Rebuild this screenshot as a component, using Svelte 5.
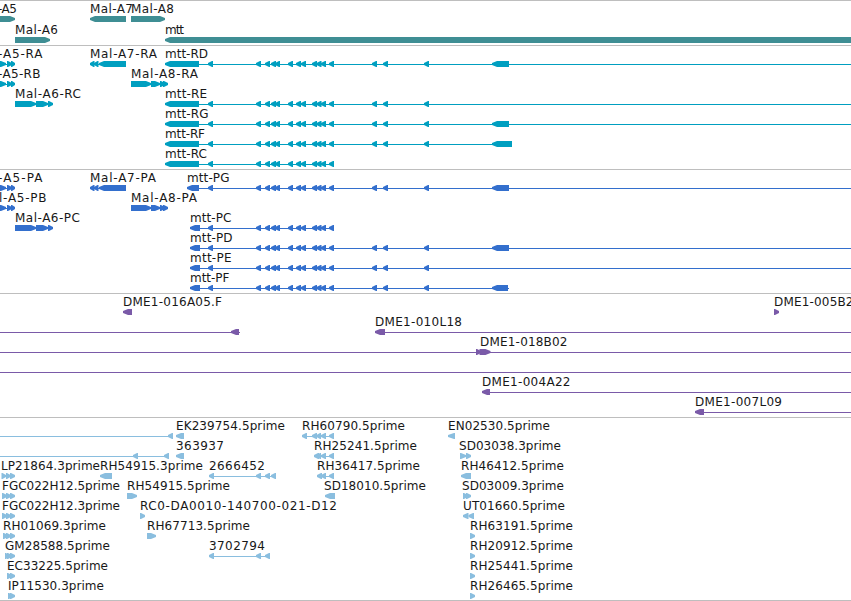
<script>
  // Feature: { line: [from, to], dir: 'l' | 'r', exons: [[from, to], ...] }
  // Label: [text, start, end]
  const L = (exons, line) => ({ dir: 'l', exons, line });
  const R = (exons, line) => ({ dir: 'r', exons, line });
  const EDGE = 851;

  const core = [208, 256, 265, 271, 275, 288, 296, 301, 312, 316.5, 321, 329].map((x) => [x, x + 5]);
  const far = [372, 383, 424].map((x) => [x, x + 5]);
  const mtt = (first, last, end) => L([first, ...core, ...(end > 334 ? far : []), ...(last ? [last] : [])], [first[0] + 5, end]);
  const a5 = () => R([[-8, 6], [7, 12], [11, 15]], [0, 12]);
  const a6 = () => R([[15, 36], [36, 48], [48, 53]], [15, 50]);
  const a7 = () => L([[90, 94.5], [94, 98.5], [99, 126]], [92, 126]);
  const a8 = () => R([[131, 151], [151, 160], [160, 165], [163, 168]], [131, 165]);

  const tracks = [
    {
      name: 'genes', color: '#3f8e94', height: 45, pitch: 21,
      rows: [
        { labels: [['-A5', -2, 16.5], ['Mal-A7', 90, 132.5], ['Mal-A8', 131, 173.5]], feats: [R([[-10, 15]]), L([[90, 126]]), R([[131, 165]])] },
        { labels: [['Mal-A6', 15, 57.5], ['mtt', 165, 183.5]], feats: [R([[15, 50]]), L([[165, 860]])] }
      ]
    },
    {
      name: 'transcripts', color: '#009fc0', height: 124, pitch: 20,
      rows: [
        { labels: [['-A5-RA', -2, 42], ['Mal-A7-RA', 90, 156.5], ['mtt-RD', 165, 207.5]], feats: [a5(), a7(), mtt([165, 199], [492, 509], EDGE)] },
        { labels: [['-A5-RB', -2, 40], ['Mal-A8-RA', 131, 197.5]], feats: [a5(), a8()] },
        { labels: [['Mal-A6-RC', 15, 80.5], ['mtt-RE', 165, 206.5]], feats: [a6(), mtt([165, 199], null, EDGE)] },
        { labels: [['mtt-RG', 165, 208]], feats: [mtt([165, 199], [492, 509], EDGE)] },
        { labels: [['mtt-RF', 165, 204.5]], feats: [mtt([165, 199], [492, 512], 512)] },
        { labels: [['mtt-RC', 165, 206.5]], feats: [mtt([165, 199], null, 334)] }
      ]
    },
    {
      name: 'proteins', color: '#336fcd', height: 124, pitch: 20,
      rows: [
        { labels: [['-A5-PA', -2, 42], ['Mal-A7-PA', 90, 155.5], ['mtt-PG', 187, 229]], feats: [a5(), a7(), mtt([187, 199], [492, 509], EDGE)] },
        { labels: [['l-A5-PB', -1, 46], ['Mal-A8-PA', 131, 196.5]], feats: [a5(), a8()] },
        { labels: [['Mal-A6-PC', 15, 79.5], ['mtt-PC', 190, 231]], feats: [a6(), mtt([190, 200], null, 334)] },
        { labels: [['mtt-PD', 190, 232]], feats: [mtt([190, 200], [492, 509], EDGE)] },
        { labels: [['mtt-PE', 190, 231]], feats: [mtt([190, 200], null, EDGE)] },
        { labels: [['mtt-PF', 190, 229]], feats: [mtt([190, 200], [492, 508], 509)] }
      ]
    },
    {
      name: 'clones', color: '#7a5aa8', height: 124, pitch: 20,
      rows: [
        { labels: [['DME1-016A05.F', 123, 221.5], ['DME1-005B2', 774, 853]], feats: [L([[123, 132]]), R([[774, 779]])] },
        { labels: [['DME1-010L18', 375, 461.5]], feats: [L([[231, 239]], [0, 240]), L([[375, 385]], [380, EDGE])] },
        { labels: [['DME1-018B02', 480, 567]], feats: [R([[476, 481], [479.5, 490.5]], [0, EDGE])] },
        { labels: [], feats: [L([], [0, EDGE])] },
        { labels: [['DME1-004A22', 482, 570]], feats: [L([[482, 490]], [486, EDGE])] },
        { labels: [['DME1-007L09', 695, 781.5]], feats: [L([[695, 704]], [700, EDGE])] }
      ]
    },
    {
      name: 'ests', color: '#8abedf', height: 184, pitch: 20,
      rows: [
        { labels: [['EK239754.5prime', 176, 284.5], ['RH60790.5prime', 302, 404.5], ['EN02530.5prime', 448, 549.5]],
          feats: [L([[168, 173]], [0, 172]), L([[176, 184]]), L([[302, 307], [312, 317], [316.5, 321], [321, 326], [329, 334]], [305, 332]), L([[448, 455]])] },
        { labels: [['363937', 176, 223.5], ['RH25241.5prime', 314, 416.5], ['SD03038.3prime', 459, 560.5]],
          feats: [L([[133, 138], [164, 169]], [0, 168]), L([[176, 184]]), L([[314, 319], [317, 321], [321, 326], [329, 334]], [316, 332]), R([[460, 466], [466, 471]])] },
        { labels: [['LP21864.3prime', 1, 99.5], ['RH54915.3prime', 100, 202.5], ['2666452', 209, 264.5], ['RH36417.5prime', 317, 419.5], ['RH46412.5prime', 461, 563.5]],
          feats: [R([[1.5, 6], [6, 10.5], [10, 15]], [2, 13]), L([[100, 112]]), L([[209, 214], [256, 261], [265, 270], [271, 276]], [211, 275]), L([[317, 322], [321, 326], [329, 334]], [319, 332]), L([[461, 471]])] },
        { labels: [['FGC022H12.5prime', 2, 119.5], ['RH54915.5prime', 127, 229.5], ['SD18010.5prime', 324, 425.5], ['SD03009.3prime', 462, 563.5]],
          feats: [R([[2, 7], [6, 11], [10, 15]], [2, 13]), R([[127, 137]]), L([[325, 335]]), R([[463, 468], [466, 471]])] },
        { labels: [['FGC022H12.3prime', 2, 119.5], ['RC0-DA0010-140700-021-D12', 140, 336.5], ['UT01660.5prime', 463, 564.5]],
          feats: [R([[2, 7], [6, 11], [10, 15]], [2, 13]), R([[140, 145]]), L([[463, 468.5], [468.5, 474]])] },
        { labels: [['RH01069.3prime', 3, 105.5], ['RH67713.5prime', 147, 249.5], ['RH63191.5prime', 470, 572.5]],
          feats: [R([[3, 8], [6, 11], [10, 15]], [3, 13]), R([[147, 156]]), R([[470, 475]])] },
        { labels: [['GM28588.5prime', 5, 109.5], ['3702794', 209, 264.5], ['RH20912.5prime', 470, 572.5]],
          feats: [R([[5, 9], [7, 12], [10, 15]], [5, 13]), L([[209, 214], [256, 261], [265, 270]], [211, 269]), R([[470, 475]])] },
        { labels: [['EC33225.5prime', 7, 107.5], ['RH25441.5prime', 470, 572.5]], feats: [R([[7, 12], [10, 15]]), R([[470, 475]])] },
        { labels: [['IP11530.3prime', 8, 103.5], ['RH26465.5prime', 470, 572.5]], feats: [R([[8, 13], [10, 15]]), R([[470, 475]])] }
      ]
    }
  ];

  // Block with a tapered head at its downstream end.
  function block([a, b], dir) {
    const w = b - a;
    const h = w > 7 ? 5 : w - 1;
    return dir === 'l'
      ? `M${a} 15L${a + h} 13H${b}V19H${a + h}L${a} 17Z`
      : `M${b} 15L${b - h} 13H${a}V19H${b - h}L${b} 17Z`;
  }
</script>

<main class="browser">
  {#each tracks as track (track.name)}
    <section class="track" style="height: {track.height}px; color: {track.color}">
      {#each track.rows as row}
        <svg class="row" width="851" height={track.pitch}>
          {#each row.feats as feat}
            {#if feat.line}
              <rect x={feat.line[0]} y="16" width={feat.line[1] - feat.line[0]} height="1" shape-rendering="crispEdges" />
            {/if}
            {#each feat.exons as exon}
              <path d={block(exon, feat.dir)} />
            {/each}
          {/each}
          {#each row.labels as [text, from, to]}
            <text x={from} y="10" textLength={to - from + 0.5}>{text}</text>
          {/each}
        </svg>
      {/each}
    </section>
  {/each}
</main>

<style>
  :global(body) {
    margin: 0;
    background: #fff;
  }
  .browser {
    width: 851px;
    height: 601px;
    overflow: hidden;
    background: #fff;
  }
  .track {
    box-sizing: border-box;
    display: flex;
    flex-direction: column;
    padding-top: 2px;
    border-top: 1px solid #bebebe;
  }
  .track:last-child {
    border-bottom: 1px solid #bebebe;
  }
  .row {
    display: block;
    flex: none;
    overflow: visible;
    fill: currentColor;
  }
  text {
    font: 12px 'DejaVu Sans', sans-serif;
    fill: #181818;
  }
</style>
